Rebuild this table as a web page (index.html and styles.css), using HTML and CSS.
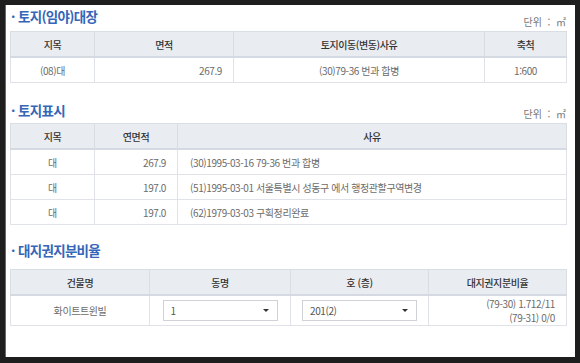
FILE: index.html
```html
<!DOCTYPE html>
<html lang="ko">
<head>
<meta charset="utf-8">
<link rel="stylesheet" href="styles.css">
</head>
<body>
<div class="page">
  <section class="sec sec1">
    <div class="sec-head">
      <h2 class="title"><span class="dot">·</span>토지(임야)대장</h2>
      <div class="unit">단위 &nbsp;:&nbsp; ㎡</div>
    </div>
    <table class="grid t1">
      <colgroup><col style="width:84px"><col style="width:139px"><col style="width:251px"><col></colgroup>
      <thead><tr><th>지목</th><th>면적</th><th>토지이동(변동)사유</th><th>축척</th></tr></thead>
      <tbody>
        <tr><td class="c">(08)대</td><td class="r">267.9</td><td class="c">(30)79-36 번과 합병</td><td class="c">1:600</td></tr>
      </tbody>
    </table>
  </section>

  <section class="sec sec2">
    <div class="sec-head">
      <h2 class="title"><span class="dot">·</span>토지표시</h2>
      <div class="unit">단위 &nbsp;:&nbsp; ㎡</div>
    </div>
    <table class="grid t2">
      <colgroup><col style="width:84px"><col style="width:83px"><col></colgroup>
      <thead><tr><th>지목</th><th>연면적</th><th>사유</th></tr></thead>
      <tbody>
        <tr><td class="c">대</td><td class="r">267.9</td><td class="l">(30)1995-03-16 79-36 번과 합병</td></tr>
        <tr><td class="c">대</td><td class="r">197.0</td><td class="l">(51)1995-03-01 서울특별시 성동구 에서 행정관할구역변경</td></tr>
        <tr><td class="c">대</td><td class="r">197.0</td><td class="l">(62)1979-03-03 구획정리완료</td></tr>
      </tbody>
    </table>
  </section>

  <section class="sec sec3">
    <div class="sec-head">
      <h2 class="title"><span class="dot">·</span>대지권지분비율</h2>
    </div>
    <table class="grid t3">
      <colgroup><col style="width:139px"><col style="width:141px"><col style="width:138px"><col></colgroup>
      <thead><tr><th>건물명</th><th>동명</th><th>호 (층)</th><th>대지권지분비율</th></tr></thead>
      <tbody>
        <tr>
          <td class="c">화이트트윈빌</td>
          <td class="c"><div class="select"><span>1</span><span class="arrow"></span></div></td>
          <td class="c"><div class="select"><span>201(2)</span><span class="arrow"></span></div></td>
          <td class="r ratio">(79-30) 1.712/11<br>(79-31) 0/0</td>
        </tr>
      </tbody>
    </table>
  </section>
</div>
</body>
</html>
```

FILE: styles.css
```css
html, body {
  margin: 0;
  padding: 0;
  background: #1e1e1e;
  height: 363px;
  overflow: hidden;
}
body {
  padding: 5px 5px 0 5px;
  box-sizing: border-box;
  font-family: "Noto Sans CJK KR", "Noto Sans", sans-serif;
}
.page {
  background: #fff;
  height: 352px;
  padding: 2px 8px 0 4px;
  box-sizing: border-box;
  border-left: 1px solid #6a6a6a;
}
.sec-head {
  display: flex;
  justify-content: space-between;
  align-items: flex-start;
}
.title {
  margin: 0;
  font-size: 13.5px;
  line-height: 18px;
  font-weight: 700;
  color: #3566b8;
  letter-spacing: -0.7px;
}
.dot {
  display: inline-block;
  width: 7px;
  margin-left: 1px;
  font-weight: 700;
}
.unit {
  align-self: flex-end;
  font-size: 10px;
  line-height: 12px;
  color: #777;
  margin-bottom: 3px;
  padding-right: 1px;
}
.sec1 .sec-head { height: 24px; }
.sec2 { margin-top: 18px; }
.sec2 .sec-head { height: 22px; }
.sec3 { margin-top: 16px; }
.sec3 .sec-head { height: 28px; }

.grid {
  width: 100%;
  border-collapse: collapse;
  table-layout: fixed;
  font-size: 10px;
  letter-spacing: -0.4px;
  border: 1px solid #d9dde4;
}
.grid th {
  background: #e9ecf1;
  color: #333;
  font-weight: 500;
  height: 24px;
  padding: 0;
  border: 1px solid #d9dde4;
  border-bottom: 2px solid #d5d9e1;
  text-align: center;
}
.grid td {
  color: #6b6b6b;
  height: 24px;
  padding: 0 11px;
  border: 1px solid #dfe2e8;
  white-space: nowrap;
}
.t2 td { height: 24px; }
.t3 td { height: 29px; }
.c { text-align: center; }
.r { text-align: right; }
.l { text-align: left; }
.t2 td.l { padding-left: 12px; }
.ratio { line-height: 14px; padding-right: 11px; }

.select {
  display: flex;
  justify-content: space-between;
  align-items: center;
  width: 115px;
  height: 21px;
  box-sizing: border-box;
  margin: 0 auto;
  border: 1px solid #cfd2d7;
  padding: 0 8px 0 7px;
  color: #555;
  background: #fff;
}
.arrow {
  width: 0;
  height: 0;
  border-left: 3px solid transparent;
  border-right: 3px solid transparent;
  border-top: 3px solid #333;
}
```
